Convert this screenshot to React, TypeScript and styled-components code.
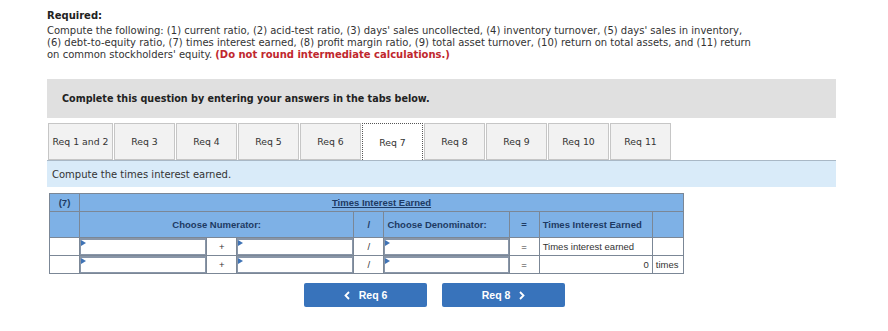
import React from 'react'
import styled, { createGlobalStyle } from 'styled-components'

const GlobalStyle = createGlobalStyle`
  body {
    margin: 0;
    background: #fff;
    font-family: 'Liberation Sans', Arial, sans-serif;
  }
`

const Page = styled.div`
  width: 789px;
  padding: 10px 0 0 47px;
`

const Required = styled.div`
  font-family: 'DejaVu Sans', 'Open Sans', sans-serif;
  font-size: 10px;
  line-height: 12px;
  color: #333;
  white-space: nowrap;
  strong {
    display: block;
    font-weight: 700;
    color: #222;
    margin-bottom: 3px;
  }
  em {
    font-style: normal;
    font-weight: 700;
    color: #c0272d;
  }
`

const GrayBox = styled.div`
  margin-top: 18px;
  height: 39px;
  background: #e0e0e0;
  display: flex;
  align-items: center;
  padding-left: 15px;
  font-family: 'DejaVu Sans', Verdana, sans-serif;
  font-size: 9.6px;
  font-weight: bold;
  color: #222;
`

const TabRow = styled.div`
  display: flex;
  gap: 1px;
  margin-top: 5px;
  padding-left: 1px;
`

const Tab = styled.div<{ $active?: boolean; $wide?: boolean }>`
  box-sizing: border-box;
  width: ${p => (p.$wide ? '65px' : '61px')};
  height: 37px;
  display: flex;
  align-items: center;
  justify-content: center;
  font-family: 'DejaVu Sans', Verdana, sans-serif;
  font-size: 9.3px;
  color: #333;
  background: ${p => (p.$active ? '#fff' : '#f2f2f2')};
  border: ${p => (p.$active ? '1px dotted #555' : '1px solid #c6c6c6')};
  border-bottom: ${p => (p.$active ? 'none' : '1px solid #c6c6c6')};
`

const Instruction = styled.div`
  height: 26px;
  background: #d9ebf9;
  border-top: 1px solid #a9b8c6;
  display: flex;
  align-items: center;
  padding-left: 5px;
  font-family: 'DejaVu Sans', Verdana, sans-serif;
  font-size: 10px;
  color: #333;
`

const Table = styled.table`
  margin: 6px 0 0 2px;
  border-collapse: collapse;
  table-layout: fixed;
  width: 635px;
  font-family: 'Liberation Sans', Arial, sans-serif;
  font-size: 9.5px;
  color: #333;
  td {
    border: 1px solid #7b8796;
    padding: 0;
  }
`

const Row = styled.tr<{ $h: number }>`
  height: ${p => p.$h}px;
`

const HeadCell = styled.td<{ $align?: string }>`
  background: #7eb1e6;
  color: #1d3a63;
  font-weight: bold;
  text-align: ${p => p.$align || 'center'};
  padding: ${p => (p.$align === 'left' ? '0 3px !important' : '0')};
`

const Title = styled.span`
  text-decoration: underline;
`

const Cell = styled.td<{ $align?: string }>`
  background: #fff;
  text-align: ${p => p.$align || 'center'};
  padding: 0 3px !important;
  white-space: nowrap;
`

const InputCell = styled.td`
  background: #fff;
`

const Field = styled.div`
  box-sizing: border-box;
  height: 17px;
  border: 1px solid #8996a8;
  border-top-width: 2px;
  background: #fff;
  position: relative;
  &::before {
    content: '';
    position: absolute;
    left: 0;
    top: 0;
    border-top: 3px solid transparent;
    border-bottom: 3px solid transparent;
    border-left: 5px solid #3f73b5;
  }
`

const ButtonRow = styled.div`
  display: flex;
  gap: 15px;
  margin-top: 9px;
  padding-left: 257px;
`

const NavButton = styled.div`
  box-sizing: border-box;
  width: 123px;
  height: 24px;
  background: #3873bb;
  border-radius: 2px;
  color: #fff;
  font-family: 'Liberation Sans', Arial, sans-serif;
  font-weight: bold;
  font-size: 10.5px;
  display: flex;
  align-items: center;
  justify-content: center;
  gap: 9px;
`

const Chevron = ({ dir }: { dir: 'left' | 'right' }) => (
  <svg width="6" height="9" viewBox="0 0 6 9">
    <path
      d={dir === 'left' ? 'M5 1 L1.5 4.5 L5 8' : 'M1 1 L4.5 4.5 L1 8'}
      stroke="#fff"
      strokeWidth="1.8"
      fill="none"
    />
  </svg>
)

const tabs = ['Req 1 and 2', 'Req 3', 'Req 4', 'Req 5', 'Req 6', 'Req 7', 'Req 8', 'Req 9', 'Req 10', 'Req 11']

const widths = [30, 127, 30, 117, 30, 125, 30, 113, 31]

export default function App() {
  return (
    <Page>
      <GlobalStyle />
      <Required>
        <strong>Required:</strong>
        Compute the following: (1) current ratio, (2) acid-test ratio, (3) days' sales uncollected, (4) inventory turnover, (5) days' sales in inventory,
        <br />
        (6) debt-to-equity ratio, (7) times interest earned, (8) profit margin ratio, (9) total asset turnover, (10) return on total assets, and (11) return
        <br />
        on common stockholders' equity. <em>(Do not round intermediate calculations.)</em>
      </Required>
      <GrayBox>Complete this question by entering your answers in the tabs below.</GrayBox>
      <TabRow>
        {tabs.map((t, i) => (
          <Tab key={t} $wide={i === 0} $active={t === 'Req 7'}>
            {t}
          </Tab>
        ))}
      </TabRow>
      <Instruction>Compute the times interest earned.</Instruction>
      <Table>
        <colgroup>
          {widths.map((w, i) => (
            <col key={i} style={{ width: w }} />
          ))}
        </colgroup>
        <tbody>
          <Row $h={18}>
            <HeadCell>(7)</HeadCell>
            <HeadCell colSpan={8}>
              <Title>Times Interest Earned</Title>
            </HeadCell>
          </Row>
          <Row $h={26}>
            <HeadCell />
            <HeadCell colSpan={3}>Choose Numerator:</HeadCell>
            <HeadCell>/</HeadCell>
            <HeadCell $align="left">Choose Denominator:</HeadCell>
            <HeadCell>=</HeadCell>
            <HeadCell $align="left">Times Interest Earned</HeadCell>
            <HeadCell />
          </Row>
          <Row $h={18}>
            <Cell />
            <InputCell><Field /></InputCell>
            <Cell>+</Cell>
            <InputCell><Field /></InputCell>
            <Cell>/</Cell>
            <InputCell><Field /></InputCell>
            <Cell>=</Cell>
            <Cell $align="left">Times interest earned</Cell>
            <Cell />
          </Row>
          <Row $h={18}>
            <Cell />
            <InputCell><Field /></InputCell>
            <Cell>+</Cell>
            <InputCell><Field /></InputCell>
            <Cell>/</Cell>
            <InputCell><Field /></InputCell>
            <Cell>=</Cell>
            <Cell $align="right">0</Cell>
            <Cell $align="left">times</Cell>
          </Row>
        </tbody>
      </Table>
      <ButtonRow>
        <NavButton>
          <Chevron dir="left" />
          Req 6
        </NavButton>
        <NavButton>
          Req 8
          <Chevron dir="right" />
        </NavButton>
      </ButtonRow>
    </Page>
  )
}
